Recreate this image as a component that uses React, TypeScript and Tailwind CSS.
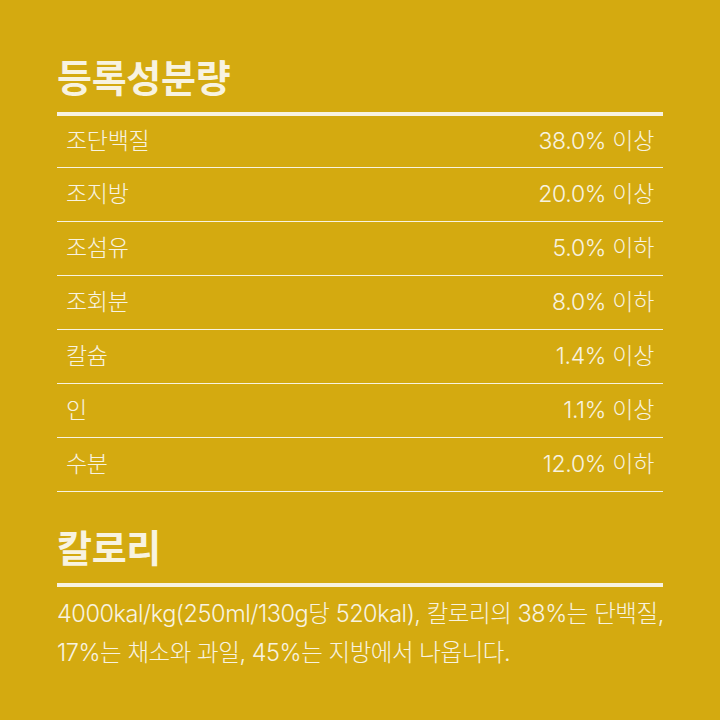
import React from "react";

const rows: [string, string][] = [
  ["조단백질", "38.0% 이상"],
  ["조지방", "20.0% 이상"],
  ["조섬유", "5.0% 이하"],
  ["조회분", "8.0% 이하"],
  ["칼슘", "1.4% 이상"],
  ["인", "1.1% 이상"],
  ["수분", "12.0% 이하"],
];

export default function App() {
  return (
    <div
      className="w-[720px] h-[720px] bg-[#D4AA10] text-[#F8F3E0] px-[57px] pt-[56px]"
      style={{ fontFamily: "Inter, 'Noto Sans CJK KR', sans-serif" }}
    >
      <h2 className="text-[38px] font-bold leading-[44px] tracking-[-0.3px]">등록성분량</h2>
      <div className="mt-[12px] h-[4px] bg-[#F8F3E0]" />
      <div>
        {rows.map(([k, v], i) => (
          <div
            key={k}
            className={`flex items-center justify-between px-[9px] border-b border-[#F8F3E0] text-[23px] font-light tracking-[-0.3px] ${
              i === 0 ? "h-[52px]" : "h-[54px]"
            }`}
          >
            <span>{k}</span>
            <span>{v}</span>
          </div>
        ))}
      </div>
      <h2 className="mt-[34px] text-[38px] font-bold leading-[44px] tracking-[-0.3px]">칼로리</h2>
      <div className="mt-[13px] h-[4px] bg-[#F8F3E0]" />
      <p className="mt-[7px] text-[23.5px] font-light leading-[39px] tracking-[-0.45px] whitespace-nowrap">
        4000kal/kg(250ml/130g당 520kal), 칼로리의 38%는 단백질,
        <br />
        17%는 채소와 과일, 45%는 지방에서 나옵니다.
      </p>
    </div>
  );
}
